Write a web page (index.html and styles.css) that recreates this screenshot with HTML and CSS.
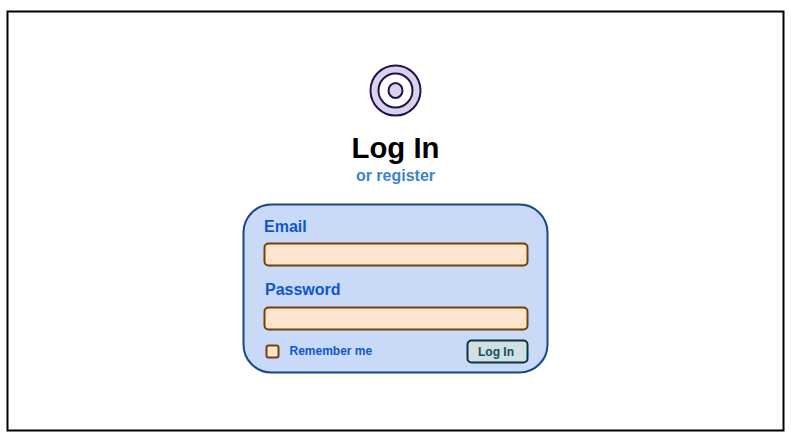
FILE: index.html
```html
<!DOCTYPE html>
<html lang="en">
<head>
<meta charset="utf-8">
<title>Log In</title>
<link rel="stylesheet" href="styles.css">
</head>
<body>
<main class="screen">
  <svg class="logo" width="54" height="54" viewBox="0 0 54 54" aria-hidden="true">
    <circle cx="27" cy="27" r="25" fill="#d9d2e9"/>
    <circle cx="27" cy="27" r="17" fill="#fff"/>
    <ellipse cx="27" cy="27" rx="7" ry="7.5" fill="#d9d2e9"/>
  </svg>
  <h1 class="title">Log In</h1>
  <a class="register">or register</a>
  <form class="card">
    <label class="label" for="email">Email</label>
    <input class="field" id="email" type="email">
    <label class="label label-password" for="password">Password</label>
    <input class="field" id="password" type="password">
    <div class="actions">
      <input class="check" id="remember" type="checkbox">
      <label class="remember" for="remember">Remember me</label>
      <button class="submit" type="button">Log In</button>
    </div>
  </form>
</main>
</body>
</html>
```
FILE: styles.css
```css
* { box-sizing: border-box; }
body {
  margin: 0;
  padding: 11px 6px 6px 7px;
  height: 438px;
  background: #fff;
  font-family: "Liberation Sans", Arial, sans-serif;
  font-weight: bold;
}
.screen {
  height: 421px;
  border: 2px solid #000;
  padding-top: 51px;
  display: flex;
  flex-direction: column;
  align-items: center;
  transform: translate(-0.5px, -0.5px);
}
.logo { display: block; flex: none; stroke: #20124d; stroke-width: 2; }
.title { margin: 13px 0 0; font-size: 29.3px; line-height: 33px; }
.register { color: #3d85c6; font-size: 16px; line-height: 20px; margin-top: 2px; }
.card {
  width: 306px;
  height: 170px;
  margin-top: 18px;
  padding: 11px 18px 0 19px;
  border: 2px solid #1c4587;
  border-radius: 29px;
  background: #c9daf8;
}
.label { display: block; color: #1155cc; font-size: 16px; line-height: 20px; margin-left: 0.5px; }
.label-password { margin: 13px 0 0 1.5px; }
.field {
  display: block;
  width: 265px;
  height: 24px;
  margin: 6px 0 0;
  padding: 0 6px;
  border: 2px solid #783f04;
  border-radius: 5px;
  background: #fce5cd;
}
.label-password + .field { margin-top: 7px; }
.actions { display: flex; align-items: center; height: 24px; margin-top: 9px; }
.check {
  appearance: none;
  width: 14px;
  height: 14px;
  margin: 0 0 0 2px;
  border: 2px solid #783f04;
  border-radius: 3px;
  background: #fce5cd;
}
.remember { margin-left: 10px; padding-bottom: 2px; color: #1155cc; font-size: 12px; }
.submit {
  width: 62px;
  height: 24px;
  margin-left: auto;
  padding: 0 3px 0 0;
  border: 2px solid #0c343d;
  border-radius: 5px;
  background: #d0e0e3;
  color: #134f5c;
  font: bold 12px "Liberation Sans", Arial, sans-serif;
}
```
